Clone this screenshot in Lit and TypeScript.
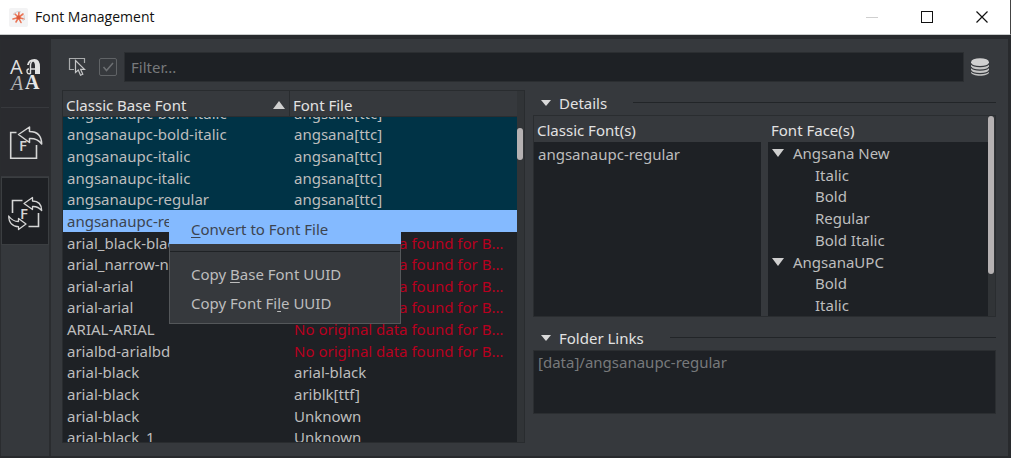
import { LitElement, html, css, svg } from "lit";
import { customElement, state } from "lit/decorators.js";
import { classMap } from "lit/directives/class-map.js";

interface FontRow {
  base: string;
  file: string;
  kind: "linked" | "current" | "missing" | "plain";
}

const MISSING = "No original data found for Base Font";

const ROWS: FontRow[] = [
  { base: "angsanaupc-bold-italic", file: "angsana[ttc]", kind: "linked" },
  { base: "angsanaupc-bold-italic", file: "angsana[ttc]", kind: "linked" },
  { base: "angsanaupc-italic", file: "angsana[ttc]", kind: "linked" },
  { base: "angsanaupc-italic", file: "angsana[ttc]", kind: "linked" },
  { base: "angsanaupc-regular", file: "angsana[ttc]", kind: "linked" },
  { base: "angsanaupc-regular", file: "angsana[ttc]", kind: "current" },
  { base: "arial_black-black", file: MISSING, kind: "missing" },
  { base: "arial_narrow-narrow", file: MISSING, kind: "missing" },
  { base: "arial-arial", file: MISSING, kind: "missing" },
  { base: "arial-arial", file: MISSING, kind: "missing" },
  { base: "ARIAL-ARIAL", file: MISSING, kind: "missing" },
  { base: "arialbd-arialbd", file: MISSING, kind: "missing" },
  { base: "arial-black", file: "arial-black", kind: "plain" },
  { base: "arial-black", file: "ariblk[ttf]", kind: "plain" },
  { base: "arial-black", file: "Unknown", kind: "plain" },
  { base: "arial-black_1", file: "Unknown", kind: "plain" },
];

const FACES = [
  { name: "Angsana New", group: true },
  { name: "Italic", group: false },
  { name: "Bold", group: false },
  { name: "Regular", group: false },
  { name: "Bold Italic", group: false },
  { name: "AngsanaUPC", group: true },
  { name: "Bold", group: false },
  { name: "Italic", group: false },
];

const lettersIcon = svg`
  <text x="10" y="74" font-family="Open Sans, sans-serif" font-size="20" fill="#dedede">A</text>
  <path d="M30.500 74V66q0-5.500 4-5.500M30.500 69H36M30.500 73.500q-3.500 1-3.500-2.500q0-2 2-2" fill="none" stroke="#dedede" stroke-width="1.400"/>
  <path d="M27 65q1-6 7.500-6q5.500 0 5.500 8V74h-5V66q0-4-2.500-4.800q-3 0-3.500 3.800z" fill="#e2e2e2"/>
  <text x="11" y="90" font-family="Liberation Serif, serif" font-style="italic" font-size="20" fill="#b4b4b4">A</text>
  <text x="25" y="89" font-family="Liberation Serif, serif" font-weight="bold" font-size="20" fill="#e6e6e6">A</text>`;

const exportIcon = svg`
  <path d="M16.500 133.500H10.700V159.300H36.500V146" fill="none" stroke="#d6d6d6" stroke-width="1.600"/>
  <path d="M18.500 135.500L29.500 128V132.500C37 132.500 41.500 137 41.700 145C38.500 140.500 35 139.300 29.500 139.500V143.500Z" fill="none" stroke="#d6d6d6" stroke-width="1.500" stroke-linejoin="round"/>
  <text x="19" y="152" font-family="Open Sans, sans-serif" font-weight="600" font-size="15" fill="#d6d6d6">F</text>`;

const convertIcon = svg`
  <path d="M12.500 213V200.500H22.500M38.500 213V226.500H28.500" fill="none" stroke="#d6d6d6" stroke-width="1.600"/>
  <path d="M24 203.500L32.500 197.500V201C38 201 41.500 204.500 41.700 210.500C39 207.300 36.500 206.300 32.500 206.500V209.500Z" fill="none" stroke="#d6d6d6" stroke-width="1.300" stroke-linejoin="round"/>
  <path d="M26 224L18.500 229.500V226.700C12.500 226.500 8.700 222.500 8.700 216C11.500 220 14.500 221.500 18.500 221.500V218.500Z" fill="none" stroke="#d6d6d6" stroke-width="1.300" stroke-linejoin="round"/>
  <text x="20" y="219" font-family="Open Sans, sans-serif" font-weight="600" font-size="15" fill="#d6d6d6">F</text>`;

const TABS = [
  { label: "Fonts", box: "5 51 40 44", icon: lettersIcon },
  { label: "Export", box: "5 121 40 44", icon: exportIcon },
  { label: "Convert", box: "5 189 40 44", icon: convertIcon },
];

@customElement("app-root")
export class AppRoot extends LitElement {
  @state() private tab = 2;

  static styles = css`
    :host {
      display: block;
      position: relative;
      font-family: "Noto Sans", "Open Sans", sans-serif;
      font-size: 15px;
      line-height: 20px;
      color: #bdbdbd;
      background: #fff;
    }
    * { box-sizing: border-box; }
    button { font: inherit; color: inherit; border: 0; padding: 0; background: none; }
    svg { display: block; }
    .window {
      display: flex;
      flex-direction: column;
      height: calc(100vh - 2px);
      min-height: 400px;
    }
    .titlebar {
      display: flex;
      align-items: center;
      height: 35px;
      padding: 0 1px 0 9px;
      background: #fff;
      color: #111;
      border-bottom: 1px solid #c9cccc;
      border-right: 1px solid #444;
    }
    .title {
      flex: 1;
      margin: 0 0 0 7px;
      font-family: "Open Sans", sans-serif;
      font-size: 14px;
      font-weight: 400;
    }
    .winbtn { width: 55px; height: 32px; display: grid; place-items: center; }
    .body {
      flex: 1;
      display: flex;
      min-height: 0;
      padding: 4px 3px 2px 0;
      background: #282a2d;
    }
    .tabs {
      width: 51px;
      background: #35383c;
      border-left: 1px solid #2a2c2f;
      border-right: 2px solid #2a2c2f;
    }
    .tab {
      width: 100%;
      height: 69px;
      display: grid;
      place-items: center;
      background: #2a2b2f;
      border-bottom: 1px solid #37393d;
    }
    .tab.on { background: #1e2024; border: 1px solid #3b3e41; height: 68px; }
    .main {
      flex: 1;
      min-width: 0;
      display: flex;
      flex-direction: column;
      gap: 8px;
      padding: 13px 12px 13px 11px;
      background: #36393d;
    }
    .toolbar { display: flex; align-items: center; height: 30px; padding: 0 7px 0 6px; }
    .toolbar .pick { margin-right: 11px; }
    .check { display: grid; width: 18px; height: 18px; margin-right: 7px; }
    .check input {
      grid-area: 1 / 1;
      appearance: none;
      margin: 0;
      border: 1px solid #606366;
      border-radius: 2px;
    }
    .check svg { grid-area: 1 / 1; }
    .filter {
      flex: 1;
      min-width: 0;
      height: 30px;
      padding: 0 6px;
      font: inherit;
      color: #bdbdbd;
      background: #1e2125;
      border: 1px solid #2b2e31;
      outline: none;
    }
    .filter::placeholder { color: #77797b; opacity: 1; }
    .data { margin-left: 7px; }
    .columns {
      flex: 1;
      min-height: 0;
      display: grid;
      grid-template-columns: 1fr 1fr;
      gap: 8px;
    }
    .list {
      display: flex;
      min-width: 0;
      min-height: 0;
      border: 1px solid #292c2f;
      background: #1e2125;
    }
    .fonts {
      flex: 1;
      min-width: 0;
      display: flex;
      flex-direction: column;
      overflow: hidden;
    }
    .fonts thead { display: block; position: relative; z-index: 1; }
    .fonts tr { display: grid; grid-template-columns: 1fr 1fr; align-items: center; min-height: 0; }
    .fonts thead tr { height: 26px; background: #36393d; border-bottom: 1px solid #2b2e31; }
    .fonts th {
      display: flex;
      align-items: center;
      justify-content: space-between;
      height: 100%;
      padding: 2px 4px 0 3px;
      font-weight: 400;
      color: #e2e2e2;
    }
    .fonts th:first-child { border-right: 1px solid #292c2f; }
    .fonts tbody {
      flex: 1;
      min-height: 0;
      display: grid;
      grid-template-rows: repeat(16, minmax(0, 1fr));
      margin: -15px 0 -6px;
    }
    .fonts td {
      padding: 0 8px 0 4px;
      overflow: hidden;
      white-space: nowrap;
      text-overflow: ellipsis;
    }
    .fonts .cols { grid-template-columns: 227px 1fr; }
    .linked { background: #003346; }
    .current { background: #84baff; color: #3c4450; }
    .missing td:last-child { color: #b8001f; }
    .track { width: 7px; background: #313437; }
    .thumb { width: 6px; height: 32px; margin-top: 37px; border-radius: 3px; background: #b5b1b2; }
    .side { display: flex; flex-direction: column; min-width: 0; }
    .group {
      display: flex;
      align-items: center;
      height: 25px;
      margin: 0;
      padding-left: 8px;
      font-size: 15px;
      font-weight: 400;
      color: #e2e2e2;
    }
    .group span { margin: 1px 26px 0 8px; }
    .group::after { content: ""; flex: 1; height: 1px; background: #222528; }
    .faces {
      flex: 1;
      display: flex;
      min-height: 0;
      margin-bottom: 8px;
      border: 1px solid #2a2d30;
    }
    .pane { flex: 1 1 0; min-width: 0; display: flex; flex-direction: column; }
    .pane.classic { flex-basis: 14px; }
    .pane h3 { margin: 0; padding: 4px 3px 0; height: 26px; font-size: 15px; font-weight: 400; line-height: 20px; color: #e2e2e2; }
    .items { flex: 1; min-height: 0; margin: 0; list-style: none; background: #1e2125; padding: 0; }
    .single { margin-right: 7px; padding-left: 4px; padding-top: 2px; }
    .tree { display: grid; grid-template-rows: repeat(8, minmax(0, 1fr)); }
    .tree li { display: flex; align-items: center; gap: 9px; padding-left: 47px; min-height: 0; }
    .tree .parent { padding-left: 4px; }
    .faces .thumb { height: 158px; margin: 0; }
    .links {
      height: 64px;
      margin: 0 0 29px;
      padding: 1px 4px;
      color: #77797b;
      background: #1e2125;
      border: 1px solid #2b2e31;
    }
    .menu {
      position: absolute;
      left: 169px;
      top: 214px;
      z-index: 3;
      width: 232px;
      padding-bottom: 5px;
      background: #36393d;
      border: 1px solid #54575a;
    }
    .menu button { display: block; width: 100%; height: 29px; padding: 0 21px 2px; text-align: left; }
    .menu .hot { width: calc(100% + 2px); height: 30px; margin: -1px -1px 0; padding: 0 22px; background: #84baff; color: #3c4450; }
    .menu hr { height: 1px; margin: 7px 0 8px; border: 0; background: #1f2225; }
    .menu u { text-underline-offset: 2px; text-decoration-thickness: 1px; }
  `;

  private arrow(up = false) {
    return html`<svg width="12" height="8" viewBox="0 0 12 8" aria-hidden="true">
      <path d=${up ? "M0 8L6 0L12 8Z" : "M0 0H12L6 8Z"} fill="#cfcfcf" />
    </svg>`;
  }

  private groupTitle(text: string) {
    return html`<h2 class="group">
      <svg width="10" height="7" viewBox="0 0 10 7" aria-hidden="true"><path d="M0 1H10L5 7Z" fill="#dadada" /></svg>
      <span>${text}</span>
    </h2>`;
  }

  render() {
    return html`
      <div class="window">
        <header class="titlebar">
          <svg width="19" height="19" viewBox="0 0 19 19" aria-hidden="true">
            <rect width="19" height="19" rx="2" fill="#f3f3f4" />
            <path d="M9.500 9.500L10 4M9.500 9.500L14 6M9.500 9.500L15 11M9.500 9.500L12 14.500M9.500 9.500L7 14M9.500 9.500L4 11M9.500 9.500L5.500 5.500" stroke="#ea7657" stroke-width="1.600" stroke-linecap="round" />
            <path d="M4 7Q8 2 12 4M15 7Q16 10 14 13" fill="none" stroke="#cfd2d6" stroke-width="1" />
            <circle cx="9.500" cy="9.500" r="2" fill="#dc5a3b" />
          </svg>
          <h1 class="title">Font Management</h1>
          <button class="winbtn" aria-label="Minimize">
            <svg width="12" height="12"><path d="M0 6.500H12" stroke="#cfcfcf" /></svg>
          </button>
          <button class="winbtn" aria-label="Maximize">
            <svg width="12" height="12"><rect x=".5" y=".5" width="11" height="11" fill="none" stroke="#111" /></svg>
          </button>
          <button class="winbtn" aria-label="Close">
            <svg width="12" height="12"><path d="M.5 .5L11.500 11.500M11.500 .5L.5 11.500" stroke="#111" stroke-width="1.200" /></svg>
          </button>
        </header>

        <div class="body">
          <nav class="tabs">
            ${TABS.map(
              (t, i) => html`<button
                class=${classMap({ tab: true, on: this.tab === i })}
                aria-label=${t.label}
                @click=${() => (this.tab = i)}
              ><svg width="40" height="44" viewBox=${t.box}>${t.icon}</svg></button>`
            )}
          </nav>

          <main class="main">
            <div class="toolbar">
              <button class="pick" aria-label="Pick">
                <svg width="20" height="20" viewBox="0 0 20 20">
                  <path d="M6 12.500H1.500V1.500H16.500V6" fill="none" stroke="#a9abac" stroke-width="1.200" />
                  <path d="M7.500 3.500V15.500L10.300 13L12.500 18.300L14.800 17.300L12.600 12.300H16.500Z" fill="#36393d" stroke="#c4c5c6" stroke-width="1.200" />
                </svg>
              </button>
              <label class="check">
                <input type="checkbox" checked disabled aria-label="Use filter" />
                <svg width="18" height="18"><path d="M4.500 9L7.500 12.500L14 5" fill="none" stroke="#6d7073" stroke-width="1.500" /></svg>
              </label>
              <input class="filter" type="text" placeholder="Filter..." aria-label="Filter" />
              <button class="data" aria-label="Database">
                <svg width="18" height="18" viewBox="0 0 18 18">
                  <path d="M0 4V14C0 19 18 19 18 14V4Z" fill="#c4c4c4" />
                  <ellipse cx="9" cy="4.200" rx="9" ry="4" fill="#d0d0d0" />
                  <path d="M0 5.500C1 9.700 17 9.700 18 5.500M0 9C1 13.200 17 13.200 18 9M0 12.500C1 16.700 17 16.700 18 12.500" fill="none" stroke="#36393d" stroke-width="1.200" />
                </svg>
              </button>
            </div>

            <div class="columns">
              <div class="list">
                <table class="fonts">
                  <thead>
                    <tr class="cols">
                      <th scope="col">Classic Base Font ${this.arrow(true)}</th>
                      <th scope="col">Font File</th>
                    </tr>
                  </thead>
                  <tbody>
                    ${ROWS.map(
                      (r) => html`<tr class="cols ${r.kind}"><td>${r.base}</td><td>${r.file}</td></tr>`
                    )}
                  </tbody>
                </table>
                <div class="track"><div class="thumb"></div></div>
              </div>

              <section class="side">
                ${this.groupTitle("Details")}
                <div class="faces">
                  <div class="pane classic">
                    <h3>Classic Font(s)</h3>
                    <ul class="items single"><li>angsanaupc-regular</li></ul>
                  </div>
                  <div class="pane">
                    <h3>Font Face(s)</h3>
                    <ul class="items tree">
                      ${FACES.map((f) =>
                        f.group
                          ? html`<li class="parent">${this.arrow()}${f.name}</li>`
                          : html`<li>${f.name}</li>`
                      )}
                    </ul>
                  </div>
                  <div class="track"><div class="thumb"></div></div>
                </div>
                ${this.groupTitle("Folder Links")}
                <p class="links">[data]/angsanaupc-regular</p>
              </section>
            </div>
          </main>
        </div>
      </div>

      <div class="menu" role="menu">
        <button class="hot" role="menuitem"><u>C</u>onvert to Font File</button>
        <hr />
        <button role="menuitem">Copy <u>B</u>ase Font UUID</button>
        <button role="menuitem">Copy Font Fi<u>l</u>e UUID</button>
      </div>
    `;
  }
}
